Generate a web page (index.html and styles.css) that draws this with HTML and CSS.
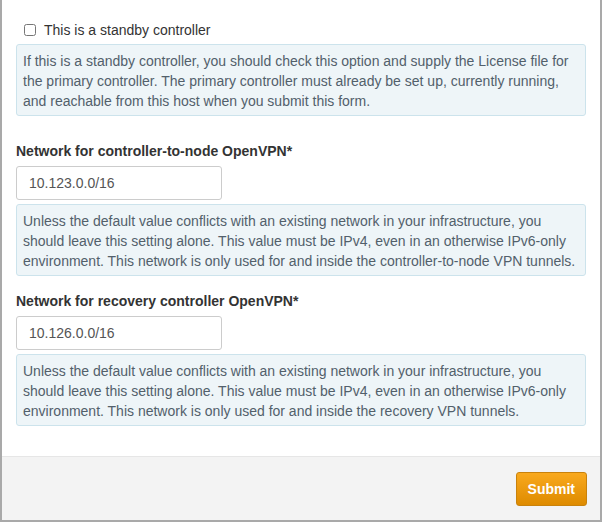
FILE: index.html
```html
<html>
<head>
    <title>Controller setup</title>
    <link rel="stylesheet" href="styles.css">
</head>
<body>
    <form class="panel">
        <div class="panel-body">
            <div class="form-group standby">
                <label class="checkbox">
                    <input type="checkbox" name="standby">
                    <span>This is a standby controller</span>
                </label>
                <div class="help">If this is a standby controller, you should check this option and supply the License file for the primary controller. The primary controller must already be set up, currently running, and reachable from this host when you submit this form.</div>
            </div>

            <div class="form-group">
                <label class="field-label" for="node-vpn">Network for controller-to-node OpenVPN*</label>
                <input class="field" id="node-vpn" type="text" value="10.123.0.0/16">
                <div class="help">Unless the default value conflicts with an existing network in your infrastructure, you should leave this setting alone. This value must be IPv4, even in an otherwise IPv6-only environment. This network is only used for and inside the controller-to-node VPN tunnels.</div>
            </div>

            <div class="form-group">
                <label class="field-label" for="recovery-vpn">Network for recovery controller OpenVPN*</label>
                <input class="field" id="recovery-vpn" type="text" value="10.126.0.0/16">
                <div class="help">Unless the default value conflicts with an existing network in your infrastructure, you should leave this setting alone. This value must be IPv4, even in an otherwise IPv6-only environment. This network is only used for and inside the recovery VPN tunnels.</div>
            </div>
        </div>
        <div class="panel-footer">
            <button class="btn-submit" type="submit">Submit</button>
        </div>
    </form>
</body>
</html>
```

FILE: styles.css
```css
html, body {
    margin: 0;
}

body {
    background-color: #FFFFFF;
    font: 14px "Liberation Sans", Arial, sans-serif;
    color: #333333;
}

.panel {
    margin: 0;
    width: 602px;
    box-sizing: border-box;
    border: 2px solid #A9A9A9;
    border-top: none;
}

.panel-body {
    padding: 20px 14px 30px 14px;
}

.form-group {
    margin-bottom: 15px;
}

.form-group:last-child {
    margin-bottom: 0;
}

.form-group.standby {
    margin-bottom: 25px;
}

.checkbox {
    display: flex;
    align-items: center;
    height: 20px;
    padding-left: 8px;
    margin-bottom: 4px;
}

.checkbox input {
    margin: 0 8px 0 0;
    width: 12px;
    height: 12px;
}

.field-label {
    display: block;
    font-weight: bold;
    line-height: 20px;
    margin-bottom: 5px;
}

.field {
    display: block;
    box-sizing: border-box;
    width: 206px;
    height: 34px;
    padding: 6px 12px;
    border: 1px solid #CCCCCC;
    border-radius: 3px;
    font: 14px "Liberation Sans", Arial, sans-serif;
    color: #555555;
    margin-bottom: 4px;
}

.help {
    background-color: #EEF5F8;
    border: 1px solid #CCE3EC;
    border-radius: 3px;
    color: #52606B;
    line-height: 20px;
    padding: 6px 6px 4px 6px;
}

.panel-footer {
    height: 63px;
    background-color: #F3F3F3;
    border-top: 1px solid #E6E6E6;
    display: flex;
    align-items: center;
    justify-content: flex-end;
    padding: 0 13px;
}

.btn-submit {
    height: 34px;
    padding: 0 11px;
    border: 1px solid #C9820C;
    border-radius: 3px;
    background: linear-gradient(#F9A91E, #DE8B00);
    color: #FFFFFF;
    font: bold 14px "Liberation Sans", Arial, sans-serif;
}
```
